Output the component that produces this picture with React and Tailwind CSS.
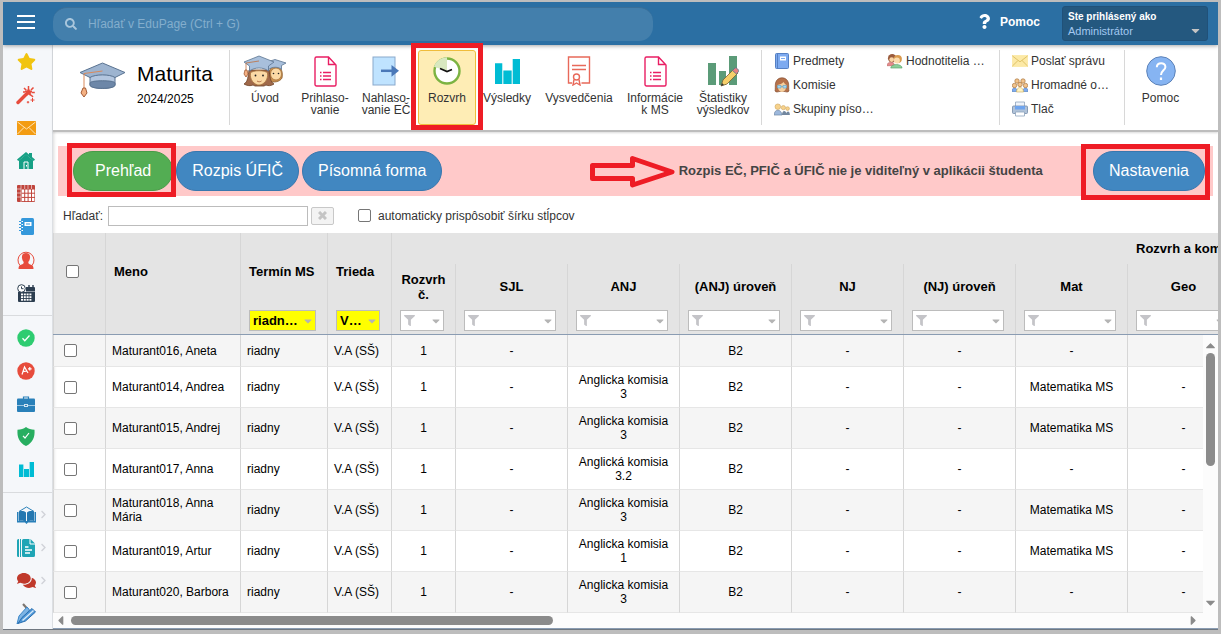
import React, { useState } from 'react';
import {
  FaStar, FaEnvelope, FaSearch, FaFilter, FaCaretDown, FaCaretUp, FaCaretLeft, FaCaretRight,
  FaTimes, FaComments, FaQuestion, FaChevronRight,
} from 'react-icons/fa';

/* ---------- sidebar icons ---------- */

const WandIcon = () => (
  <svg width="20" height="20" viewBox="0 0 20 20" fill="none" stroke="#e74c3c">
    <path d="M2 17.5L10.5 9" strokeWidth="3.4" strokeLinecap="round" />
    <path d="M12.5 1v3.5M8 3l2.3 2.3M17.5 2.5l-2.5 2.6M18.8 7.5h-3.3M17 12l-2-2M7 7h2.5" strokeWidth="1.5" />
    <path d="M12.5 3.5l1 2.3 2.5.4-1.8 1.7.4 2.5-2.1-1.2-2.2 1.2.4-2.5L9 6.200l2.500-.4z" fill="#e74c3c" />
    <path d="M16.500 13v4M14.500 15h4M12 16v2.400M10.800 17.200h2.400" strokeWidth="1" />
  </svg>
);

const HouseIcon = () => (
  <svg width="18" height="19" viewBox="0 0 18 19">
    <path d="M9 1L0 8.500l1.200 1.500L9 3.700l7.800 6.300L18 8.500l-3-2.500V2h-3v1.500z" fill="#16a085" />
    <path d="M2 9.200L9 3.500l7 5.700V18H2z" fill="#16a085" />
    <path d="M7 18v-7h4v7" fill="none" stroke="#fff" />
    <path d="M9.500 14v1.500" stroke="#fff" />
  </svg>
);

const GridIcon = () => (
  <svg width="18" height="17" viewBox="0 0 18 17">
    <rect width="18" height="17" rx="1" fill="#c0453c" />
    {[4.500, 8.700, 12.900].map((y) => [4.800, 8.200, 11.600, 15].map((x) => (
      <rect key={`${x}-${y}`} x={x} y={y} width="2.400" height="3.200" fill="#fff" />
    )))}
    <path d="M4 0v17M0 4h4M0 8h4M0 12h4M7.700 0v4M11 0v4M14.500 0v4" stroke="#f5f6f8" strokeWidth=".6" />
  </svg>
);

const NotebookIcon = () => (
  <svg width="15" height="17" viewBox="0 0 15 17">
    <rect x="2" y="0" width="13" height="17" rx="1.500" fill="#3498db" />
    <rect x="5.500" y="4" width="7" height="4" fill="#fff" />
    <path d="M7 6h4" stroke="#3498db" />
    <path d="M0 3.500h3M0 6.500h3M0 9.500h3M0 12.500h3" stroke="#3498db" />
    <path d="M2.500 3.500h1.500M2.500 6.500h1.500M2.500 9.500h1.500M2.500 12.500h1.500" stroke="#fff" />
  </svg>
);

const PersonIcon = () => (
  <svg width="18" height="20" viewBox="0 0 18 20">
    <path d="M3 15.500A8 8 0 1 1 15 15.500" fill="none" stroke="#e74c3c" />
    <path d="M9 3c3 0 4.500 2 4 5-.2 2-1 3-1.700 4 0 1.500.5 2 2.700 2.700 1.700.6 2.500 1.500 2.500 4.300H1.500c0-2.800.8-3.700 2.500-4.300 2.200-.7 2.700-1.200 2.700-2.700C6 11 5.200 10 5 8c-.5-3 1-5 4-5z" fill="#e74c3c" />
  </svg>
);

const CalendarIcon = () => (
  <svg width="18" height="18" viewBox="0 0 18 18">
    <path d="M1 8h17v9a1 1 0 0 1-1 1H2a1 1 0 0 1-1-1zM9 3h8a1 1 0 0 1 1 1v3.500H9z" fill="#2c3e50" />
    <path d="M12 1v3M16 1v3" stroke="#2c3e50" strokeWidth="1.400" />
    <circle cx="4.500" cy="4.500" r="3.800" fill="#fff" stroke="#2c3e50" />
    <path d="M4.500 2.500v2.200H6.500" fill="none" stroke="#2c3e50" />
    {[9.500, 12.200, 14.900].map((y) => [4, 6.800, 9.600, 12.400].map((x) => (
      <rect key={`${x}-${y}`} x={x} y={y} width="2" height="1.800" fill="#fff" />
    )))}
  </svg>
);

const CheckIcon = () => (
  <svg width="18" height="18" viewBox="0 0 18 18">
    <circle cx="9" cy="9" r="8.700" fill="#2ecc71" />
    <path d="M5.500 9.300l2.300 2.400 4.700-5.200" fill="none" stroke="#fff" strokeWidth="1.300" />
  </svg>
);

const GradeIcon = () => (
  <svg width="18" height="18" viewBox="0 0 18 18">
    <circle cx="9" cy="9" r="8.700" fill="#e74c3c" />
    <path d="M5 12.500L7.500 5l3.500 6M6 9.700l4-.7M12.800 5v3.600M11 6.800h3.600" fill="none" stroke="#fff" strokeWidth="1.200" />
  </svg>
);

const BriefcaseIcon = () => (
  <svg width="18" height="16" viewBox="0 0 18 16">
    <path d="M6.500 3V1h5v2" fill="none" stroke="#2980b9" strokeWidth="1.200" />
    <rect x="0" y="2.500" width="18" height="13.500" rx="1" fill="#2980b9" />
    <path d="M0 9.500h7M11 9.500h7" stroke="#9cc6e2" />
    <rect x="7.500" y="8.500" width="3" height="2" fill="none" stroke="#cfe3f1" />
  </svg>
);

const ShieldIcon = () => (
  <svg width="18" height="19" viewBox="0 0 18 19">
    <path d="M9 0c2.500 1.800 5 2.500 8.500 2.700C18 10 16 15.500 9 19 2 15.500 0 10 .5 2.700 4 2.500 6.500 1.800 9 0z" fill="#27ae60" />
    <path d="M6 8.800l2 2.200 4-5" fill="none" stroke="#fff" strokeWidth="1.200" />
  </svg>
);

const BarsIcon = ({ size }) => (
  <svg width={size} height={size} viewBox="0 0 24 24" fill="#00bcd4">
    <path d="M0 4h7v20H0zM8 11h8v13H8zM17 0h7v24h-7z" />
  </svg>
);

const BookIcon = () => (
  <svg width="19" height="18" viewBox="0 0 19 18">
    <path d="M2 5.500L9.500 1 17 5.500" fill="none" stroke="#2980b9" />
    <path d="M0 6h1.500v10H0zM17.500 6H19v10h-1.500zM0 15h19v1.500H11L9.500 18 8 16.500H0z" fill="#2980b9" />
    <path d="M2 5.500c3-.8 5-.5 7 1V16c-2-1.300-4-1.500-7-1zM17 5.500c-3-.8-5-.5-7 1V16c2-1.300 4-1.500 7-1z" fill="#2477b0" />
  </svg>
);

const PagesIcon = () => (
  <svg width="18" height="18" viewBox="0 0 18 18">
    <path d="M1.500 0H2v18h-.5A1.500 1.500 0 0 1 0 16.500v-15A1.500 1.500 0 0 1 1.500 0zM3 0h1v18H3zM6.500 0h7L18 4.500V16.500a1.500 1.500 0 0 1-1.500 1.500h-10A1.500 1.500 0 0 1 5 16.500v-15A1.500 1.500 0 0 1 6.500 0z" fill="#1fa5b5" />
    <path d="M8 8h3.500M8 11h7M8 14h5" stroke="#fff" strokeWidth="1.300" />
    <path d="M13 0v5h5" fill="none" stroke="#fff" />
  </svg>
);

const PensIcon = () => (
  <svg width="21" height="22" viewBox="0 0 21 22">
    <path d="M7 1l5 5.500" fill="none" stroke="#7c7670" strokeWidth="2.200" />
    <path d="M1 21l2-8 8-9 2.500 3-7.500 9z" fill="#7db4e4" stroke="#3a86c8" />
    <path d="M2 20.500l4-6 10-9 3.500 3.500-10 9z" fill="#4d97d8" stroke="#2a6fb0" />
    <path d="M6.500 17.500L17.500 7.500" stroke="#d5e8f8" strokeWidth="1.400" />
  </svg>
);

const sidebarGroups = [
  [
    { label: 'Obľúbené', icon: <FaStar size={19} color="#f1c40f" /> },
    { label: 'Sprievodca', icon: <WandIcon /> },
    { label: 'Správy', icon: <MailIcon width={19} height={14} fill="#f39c12" line="#fde3b4" /> },
    { label: 'Domov', icon: <HouseIcon /> },
    { label: 'Rozvrh hodín', icon: <GridIcon /> },
    { label: 'Triedna kniha', icon: <NotebookIcon /> },
    { label: 'Suplovanie', icon: <PersonIcon /> },
    { label: 'Kalendár', icon: <CalendarIcon /> },
  ],
  [
    { label: 'Dochádzka', icon: <CheckIcon /> },
    { label: 'Známky', icon: <GradeIcon /> },
    { label: 'Agenda', icon: <BriefcaseIcon /> },
    { label: 'Overenie', icon: <ShieldIcon /> },
    { label: 'Štatistiky', icon: <BarsIcon size={15} /> },
  ],
  [
    { label: 'Vyučovanie', icon: <BookIcon />, more: true },
    { label: 'Dokumenty', icon: <PagesIcon />, more: true },
    { label: 'Komunikácia', icon: <FaComments size={19} color="#c0392b" />, more: true },
    { label: 'Písanie', icon: <PensIcon /> },
  ],
];

function MailIcon({ width, height, fill, line }) {
  return (
    <svg width={width} height={height} viewBox="0 0 19 14">
      <rect x=".5" y=".5" width="18" height="13" fill={fill} stroke={fill} />
      <path d="M.5 1l9 7 9-7M.5 13l6.500-6.500M18.500 13L12 6.500" fill="none" stroke={line} />
    </svg>
  );
}

/* ---------- ribbon icons ---------- */

const CapIcon = () => (
  <svg width="47" height="37" viewBox="0 0 47 37" stroke="#5a7391" strokeWidth="1">
    <path d="M11 11v12c0 4.500 25 4.500 25 0V11z" fill="#b3c6df" />
    <path d="M11 21c0-3 25-3 25 0v2c0 4.500-25 4.500-25 0z" fill="#6d87a8" />
    <path d="M1 10.500L23.500 1 46 10.500 36 15.500c-5-3.500-20-3.500-25 0z" fill="#9db4d0" />
    <path d="M23.500 9L5 11.500V26" fill="none" stroke="#d98a5c" />
    <path d="M4 26h2.500l1.500 5-3 4-3-4z" fill="#f4b183" stroke="#a35a35" />
  </svg>
);

const GraduatesIcon = () => (
  <svg width="44" height="32" viewBox="0 0 44 32" strokeWidth=".8">
    <path d="M26 26c0-5-1-15 6-15s8 7 7 12c-2 4-9 5-13 3z" fill="#c98f4e" stroke="#8a5d2d" />
    <ellipse cx="33" cy="19" rx="5.500" ry="6" fill="#fbd9a5" stroke="#a9763f" />
    <path d="M21 8l11-3.500L43 8l-4.500 2.500v4c-3-3-9-3-13 0z" fill="#a8bfdb" stroke="#5a7391" />
    <path d="M1 29c4-2 4-8 5-14h20c1 6 1 12 5 14-3 2-6 2-8 1l-2 1h-9l-2-1c-2 1-6 1-9-1z" fill="#a0694a" stroke="#6d4228" />
    <path d="M7.500 18c2-3 15-3 17 0 1 7-4 12-8.500 12S6.500 25 7.500 18z" fill="#fbd9a5" stroke="#a9763f" />
    <path d="M1 7L16 1l15 6-5.500 4v5c-5-4-14-4-19 0v-5z" fill="#a8bfdb" stroke="#5a7391" />
    <path d="M16 6L3 8v7" fill="none" stroke="#c0703f" />
    <path d="M2 15h2l1 4-2 3-2-3z" fill="#f4b183" stroke="#a35a35" />
    <circle cx="12.500" cy="20.500" r=".9" fill="#222" />
    <circle cx="20" cy="20.500" r=".9" fill="#222" />
    <circle cx="30.500" cy="18.500" r=".8" fill="#222" />
    <circle cx="35.500" cy="18.500" r=".8" fill="#222" />
    <path d="M14 26c1.500 1 3 1 4.500 0" fill="none" stroke="#a35a35" />
  </svg>
);

const FormIcon = () => (
  <svg width="23" height="31" viewBox="0 0 23 31" fill="none" stroke="#e91e63" strokeWidth="1.400">
    <path d="M2.500 1h12L22 9v19.500a1.500 1.500 0 0 1-1.500 1.500h-18A1.500 1.500 0 0 1 1 28.500v-26A1.500 1.500 0 0 1 2.500 1zM14.500 1v7.500H22" />
    <path d="M9 16.500h8M9 20h8M9 23.500h8M6 16.500h1.500M6 20h1.500M6 23.500h1.500" strokeWidth="1.300" />
  </svg>
);

const ExportIcon = () => (
  <svg width="28" height="30" viewBox="0 0 28 30">
    <rect x="1" y="1" width="22" height="28" fill="#bfe3ff" stroke="#8aa9cc" />
    <path d="M9 14.800h13" stroke="#4a78b8" strokeWidth="2.500" />
    <path d="M19.500 9L27 14.800l-7.500 6z" fill="#4a78b8" />
  </svg>
);

const ClockIcon = () => (
  <svg width="28" height="28" viewBox="0 0 28 28">
    <circle cx="14" cy="14" r="12.500" fill="#fff" stroke="#7cb342" strokeWidth="2.400" />
    <path d="M14 14V.2A13.800 13.800 0 0 0 .9 9.700z" fill="#d8e8c0" />
    <path d="M7 11.500l7 3 5-2" fill="none" stroke="#111" strokeWidth="1.700" />
  </svg>
);

const DiplomaIcon = () => (
  <svg width="24" height="30" viewBox="0 0 24 30" fill="none" stroke="#e8695a" strokeWidth="1.400">
    <path d="M5 27H1.500V1H22.500v26h-8" />
    <path d="M5 9.500h14M5 13.500h14" strokeWidth="1.300" />
    <circle cx="9.500" cy="21" r="3" />
    <path d="M7 23.500L6 29l3.500-2 3.500 2-1-5.500" />
  </svg>
);

const StatsIcon = () => (
  <svg width="32" height="32" viewBox="0 0 32 32">
    <path d="M1 8h8v22H1zM12 16h7v14h-7zM22 1h8v29h-8z" fill="#5b9b78" />
    <path d="M14 31l2-6L27 14l4 4-11 11z" fill="#f6cf6a" stroke="#7a6030" strokeWidth=".8" />
    <path d="M25.500 15.500L28 13c1-.8 4.500 2 3.500 3.500L29.500 19z" fill="#e88080" stroke="#5a7391" strokeWidth=".8" />
    <path d="M14 31l1-3 2 2z" fill="#333" />
  </svg>
);

const HelpIcon = () => (
  <svg width="30" height="30" viewBox="0 0 30 30" fill="none">
    <circle cx="15" cy="15" r="14.300" fill="#86b4f2" stroke="#5c82b8" />
    <path d="M10.800 11.200c.2-5.200 8.600-5.200 8.600-.3 0 3.300-4.400 3.600-4.400 8" stroke="#fff" strokeWidth="2" />
    <path d="M15 21.500v2.500" stroke="#fff" strokeWidth="2.200" />
  </svg>
);

const BlueBookIcon = () => (
  <svg width="16" height="16" viewBox="0 0 16 16">
    <rect x="1.500" y=".5" width="13" height="15" rx="1" fill="#7daaf0" stroke="#5580c4" />
    <path d="M3.500 1v14" stroke="#5580c4" />
    <rect x="6" y="3.500" width="6" height="4" fill="#fff" />
    <path d="M7 5.500h4" stroke="#7daaf0" />
  </svg>
);

const FaceIcon = () => (
  <svg width="16" height="16" viewBox="0 0 16 16">
    <path d="M1 14C1.500 12 1 9 1.500 6 3-1 13-1 14.500 6c.5 3 0 6 .5 8-1 1.500-3 1-4 .5H5c-1 .5-3 1-4-.5z" fill="#b5714a" stroke="#7a4528" strokeWidth=".6" />
    <path d="M3.500 8c2-.3 5-1.500 6-3 .5 1 2 2.500 3 3 0 4-2 7-4.500 7S3.500 12 3.500 8z" fill="#f6cf9d" />
    <path d="M3.500 8.500h3.500v2.500H3.500zM9 8.500h3.500v2.500H9zM7 9.500h2" fill="#a8d8f0" stroke="#5a9fc8" strokeWidth=".6" />
  </svg>
);

const GroupIcon = () => (
  <svg width="16" height="13" viewBox="0 0 17 14">
    <circle cx="4" cy="4" r="3" fill="#f7d28c" stroke="#caa25a" strokeWidth=".6" />
    <circle cx="10" cy="5" r="2.300" fill="#f7d28c" stroke="#caa25a" strokeWidth=".6" />
    <circle cx="14.500" cy="6" r="2" fill="#f7d28c" stroke="#caa25a" strokeWidth=".6" />
    <path d="M0 13c0-7 8-7 8.500 0z" fill="#9db8dc" stroke="#5a7391" strokeWidth=".6" />
    <path d="M8.500 13c0-5 4-6 5-1v1zM13 13c0-5 4-5 4 0z" fill="#72879f" />
  </svg>
);

const ExaminersIcon = () => (
  <svg width="16" height="16" viewBox="0 0 17 16">
    <circle cx="5.500" cy="5" r="4.500" fill="#9a5b3c" />
    <path d="M0 13c0-5 8-5 8 0z" fill="#e58b8b" stroke="#b85c5c" strokeWidth=".6" />
    <circle cx="5" cy="6.500" r="2.500" fill="#f9d5a5" />
    <circle cx="11.500" cy="6" r="4.300" fill="#d99a4e" />
    <circle cx="10.500" cy="7.500" r="3.200" fill="#fbdcae" />
    <path d="M4 15.500c0-5 12-5 12 0z" fill="#8ccf9a" stroke="#4f9a60" strokeWidth=".6" />
  </svg>
);

const BulkIcon = () => (
  <svg width="16" height="15" viewBox="0 0 16 15">
    <path d="M0 13.500c0-5 5-5 5 0zM11 13.500c0-5 5-5 5 0z" fill="#7daaf0" stroke="#4a78b8" strokeWidth=".6" />
    <path d="M4.500 14c0-6 7-6 7 0z" fill="#fff4c4" stroke="#c9a95a" strokeWidth=".6" />
    {[[5, 3], [11, 3], [2.500, 7.500], [13.500, 7.500], [8, 6.500]].map(([x, y]) => (
      <circle key={`${x}-${y}`} cx={x} cy={y} r="2.200" fill="#f3c48c" stroke="#a8763f" strokeWidth=".7" />
    ))}
  </svg>
);

const PrinterIcon = () => (
  <svg width="16" height="16" viewBox="0 0 16 16" strokeWidth=".8">
    <path d="M3.500 1h9v5h-9z" fill="#eef3fa" stroke="#8ea3bd" />
    <rect x=".5" y="5" width="15" height="7.500" rx="1" fill="#b0c2d8" stroke="#7289a6" />
    <path d="M3 5h10v3.500H3z" fill="#6ea4ee" />
    <path d="M3.500 11h9v4h-9z" fill="#fff" stroke="#8ea3bd" />
  </svg>
);

const ribbonItems = [
  { lines: ['Úvod'], icon: <GraduatesIcon />, width: 'w-[60px]' },
  { lines: ['Prihlaso-', 'vanie'], icon: <FormIcon />, width: 'w-[60px]' },
  { lines: ['Nahlaso-', 'vanie EČ'], icon: <ExportIcon />, width: 'w-[62px]' },
  { lines: ['Rozvrh'], icon: <ClockIcon />, width: 'w-[60px]', active: true },
  { lines: ['Výsledky'], icon: <BarsIcon size={25} />, width: 'w-[60px]' },
  { lines: ['Vysvedčenia'], icon: <DiplomaIcon />, width: 'w-[84px]' },
  { lines: ['Informácie', 'k MS'], icon: <FormIcon />, width: 'w-[68px]' },
  { lines: ['Štatistiky', 'výsledkov'], icon: <StatsIcon />, width: 'w-[68px]' },
];

const subjectLinks = [
  { label: 'Predmety', icon: <BlueBookIcon /> },
  { label: 'Komisie', icon: <FaceIcon /> },
  { label: 'Skupiny píso…', icon: <GroupIcon /> },
];

const messageLinks = [
  { label: 'Poslať správu', icon: <MailIcon width={16} height={12} fill="#fce9a6" line="#d9bb5c" /> },
  { label: 'Hromadné o…', icon: <BulkIcon /> },
  { label: 'Tlač', icon: <PrinterIcon /> },
];

/* ---------- table data ---------- */

const subjects = ['SJL', 'ANJ', '(ANJ) úroveň', 'NJ', '(NJ) úroveň', 'Mat', 'Geo'];

const students = [
  { name: 'Maturant016, Aneta', cells: ['-', '', 'B2', '-', '-', '-', ''] },
  { name: 'Maturant014, Andrea', cells: ['-', 'Anglicka komisia 3', 'B2', '-', '-', 'Matematika MS', '-'] },
  { name: 'Maturant015, Andrej', cells: ['-', 'Anglicka komisia 3', 'B2', '-', '-', 'Matematika MS', '-'] },
  { name: 'Maturant017, Anna', cells: ['-', 'Anglická komisia 3.2', 'B2', '-', '-', '-', '-'] },
  { name: 'Maturant018, Anna Mária', cells: ['-', 'Anglicka komisia 3', 'B2', '-', '-', 'Matematika MS', '-'] },
  { name: 'Maturant019, Artur', cells: ['-', 'Anglicka komisia 1', 'B2', '-', '-', 'Matematika MS', '-'] },
  { name: 'Maturant020, Barbora', cells: ['-', 'Anglicka komisia 3', 'B2', '-', '-', '-', '-'] },
];

const CHECKBOX = 'block size-[13px] appearance-none rounded-[2px] border border-[#767676] bg-white checked:bg-[#2b6fa3]';

/* ---------- parts ---------- */

const Highlight = ({ className }) => (
  <span className={`pointer-events-none absolute z-20 border-5 border-[#ee1c25] ${className}`} />
);

const SmallLinks = ({ items, className }) => (
  <nav className={`flex flex-col ${className}`}>
    {items.map((item) => (
      <a key={item.label} href="#" className="flex h-6 items-center gap-[3px] whitespace-nowrap pb-0.5">
        <span className="flex w-4 justify-center">{item.icon}</span>
        {item.label}
      </a>
    ))}
  </nav>
);

const Divider = () => <div className="h-[75px] w-px shrink-0 bg-[#d8d8d8]" />;

const RibbonButton = ({ item }) => (
  <div className={`relative shrink-0 px-px ${item.width}`}>
    <button
      type="button"
      className={`flex h-[75px] w-full flex-col items-center rounded-[3px] border pt-0.5 ${
        item.active ? 'border-[#f0bd3c] bg-[#feedb5]' : 'border-transparent'
      }`}
    >
      <span className="flex h-9 items-center">{item.icon}</span>
      <span className="mt-[3px] whitespace-nowrap leading-3">
        {item.lines.map((line) => (
          <span key={line} className="block">{line}</span>
        ))}
      </span>
    </button>
    {item.active && <Highlight className="-inset-x-[6px] -top-[7px] -bottom-[5px]" />}
  </div>
);

const Pill = ({ children, className = 'bg-[#4187c1] border-[#3877ae] px-[15px]' }) => (
  <button type="button" className={`h-10 whitespace-nowrap rounded-full border text-base text-white ${className}`}>
    {children}
  </button>
);

const ColumnFilter = ({ label, value }) => (
  <div className={`flex h-[21px] items-center border border-[#bcbcbc] pl-[3px] ${value ? 'bg-[#ffff00]' : 'bg-white'}`}>
    {!value && <FaFilter size={11} className="shrink-0 text-[#c4c4c8]" />}
    <select
      aria-label={label}
      defaultValue={value || ''}
      className="min-w-0 flex-1 appearance-none bg-transparent text-[13px] font-bold text-black outline-none"
    >
      <option value={value || ''}>{value || ''}</option>
    </select>
    <FaCaretDown size={12} className="mr-px shrink-0 text-[#b4b4b4]" />
  </div>
);

const Columns = () => (
  <colgroup>
    <col className="w-[52px]" />
    <col className="w-[135px]" />
    <col className="w-[87px]" />
    <col className="w-[64px]" />
    <col className="w-[64px]" />
    {subjects.map((subject) => <col key={subject} className="w-[112px]" />)}
  </colgroup>
);

const TableHead = () => {
  const side = 'border-l border-[#d6d6d6]';
  const filter = `${side} pl-2 pr-[11px] align-top pt-px`;
  return (
    <table className="w-[1186px] table-fixed border-separate border-spacing-0 text-[13px] leading-[15px] text-black">
      <Columns />
      <thead>
        <tr className="h-[31px]">
          <th rowSpan={2} className={`${side} pl-3`}>
            <input type="checkbox" aria-label="Vybrať všetkých" className={CHECKBOX} />
          </th>
          <th rowSpan={2} className={`${side} pl-2 text-left`}>Meno</th>
          <th rowSpan={2} className={`${side} pl-2 text-left`}>Termín MS</th>
          <th rowSpan={2} className={`${side} pl-2 text-left`}>Trieda</th>
          <th colSpan={7} className={side} />
          <th className="whitespace-nowrap pl-[9px] text-left">Rozvrh a komisie</th>
        </tr>
        <tr className="h-[45px]">
          <th className={side}>Rozvrh<br />č.</th>
          {subjects.map((subject) => <th key={subject} className={side}>{subject}</th>)}
        </tr>
        <tr className="h-[25px]">
          <td className={side} />
          <td className={side} />
          <td className={filter}><ColumnFilter label="Termín MS" value="riadn…" /></td>
          <td className={filter}><ColumnFilter label="Trieda" value="V…" /></td>
          <td className={filter}><ColumnFilter label="Rozvrh č." /></td>
          {subjects.map((subject) => (
            <td key={subject} className={filter}><ColumnFilter label={subject} /></td>
          ))}
        </tr>
      </thead>
    </table>
  );
};

const TableBody = () => {
  const cell = 'border-l border-b border-l-[#d6d6d6] border-b-[#e6e6e6]';
  return (
    <table className="w-[1186px] table-fixed border-separate border-spacing-0 text-xs leading-[14px] text-black">
      <Columns />
      <tbody>
        {students.map((student, index) => (
          <tr key={student.name} className={`${index === 0 ? 'h-8' : 'h-[41px]'} odd:bg-[#f5f5f5]`}>
            <td className={`${cell} pl-[10px]`}>
              <input type="checkbox" aria-label={student.name} className={CHECKBOX} />
            </td>
            <td className={`${cell} px-1.5`}>{student.name}</td>
            <td className={`${cell} px-1.5`}>riadny</td>
            <td className={`${cell} px-1.5`}>V.A (SŠ)</td>
            <td className={`${cell} text-center`}>1</td>
            {student.cells.map((value, i) => (
              <td key={subjects[i]} className={`${cell} px-2 text-center`}>{value}</td>
            ))}
          </tr>
        ))}
      </tbody>
    </table>
  );
};

const TopBar = () => (
  <header className="relative z-10 flex h-[43px] items-center bg-[#2b6fa3] pr-[10px] text-white shadow-[0_1px_4px_rgba(0,0,0,0.35)]">
    <button type="button" aria-label="Menu" className="flex w-[50px] shrink-0 flex-col gap-1 pb-1 pl-[14px]">
      <span className="h-0.5 w-[18px] bg-white" />
      <span className="h-0.5 w-[18px] bg-white" />
      <span className="h-0.5 w-[18px] bg-white" />
    </button>
    <label className="flex h-[34px] w-[600px] items-center gap-[11px] rounded-[14px] border-t border-[#3a6f98] bg-[#437fac] pl-3 text-[#a9c6dc]">
      <FaSearch size={12} />
      <input
        type="text"
        aria-label="Hľadať"
        placeholder="Hľadať v EduPage (Ctrl + G)"
        className="flex-1 bg-transparent text-xs outline-none placeholder:text-[#84aecd]"
      />
    </label>
    <a href="#" className="ml-auto flex items-center gap-2 pb-1 font-bold">
      <FaQuestion size={15} />
      Pomoc
    </a>
    <button
      type="button"
      className="ml-[22px] flex h-[35px] w-[146px] flex-col justify-center rounded-[3px] border border-[#205179] bg-[#24587f] px-[5px] text-left text-[11px] leading-[14px]"
    >
      <span className="text-[10px] font-bold">Ste prihlásený ako</span>
      <span className="flex w-full items-center justify-between text-[#a3c8f0]">
        Administrátor
        <FaCaretDown size={13} className="text-[#c4c4c4]" />
      </span>
    </button>
  </header>
);

const Sidebar = () => (
  <aside className="flex w-[50px] shrink-0 flex-col border-r border-[#dcdfe3] bg-[#f5f7fa] shadow-[1px_0_3px_rgba(0,0,0,0.15)]">
    {sidebarGroups.map((group, index) => (
      <nav key={index} className={index > 0 ? 'mt-1.5 border-t border-[#d9dbde] pt-[5px]' : ''}>
        {group.map((item) => (
          <a key={item.label} href="#" title={item.label} className="relative flex h-[33px] items-center justify-center pr-[3px]">
            {item.icon}
            {item.more && <FaChevronRight size={9} className="absolute right-1 text-[#d0d3d8]" />}
          </a>
        ))}
      </nav>
    ))}
  </aside>
);

const Ribbon = () => (
  <div className="flex h-[87px] shrink-0 items-start border-b-2 border-[#bdbdbd] bg-white pt-[5px] text-xs text-[#333] shadow-[0_1px_2px_rgba(0,0,0,0.15)]">
    <div className="flex w-[176px] shrink-0 items-start gap-[11px] pl-[26px] pt-3">
      <CapIcon />
      <div className="text-black">
        <h1 className="text-[21px] leading-6">Maturita</h1>
        <p className="mt-1.5 leading-[14px]">2024/2025</p>
      </div>
    </div>
    <Divider />
    <div className="flex h-[75px] shrink-0 pl-[5px] pr-1">
      {ribbonItems.map((item) => <RibbonButton key={item.lines[0]} item={item} />)}
    </div>
    <Divider />
    <SmallLinks items={subjectLinks} className="ml-3 w-[113px]" />
    <SmallLinks items={[{ label: 'Hodnotitelia …', icon: <ExaminersIcon /> }]} className="w-[112px]" />
    <Divider />
    <SmallLinks items={messageLinks} className="ml-3 w-[112px]" />
    <Divider />
    <RibbonButton item={{ lines: ['Pomoc'], icon: <HelpIcon />, width: 'w-[71px]' }} />
  </div>
);

export default function App() {
  const [search, setSearch] = useState('');

  return (
    <div className="flex h-screen flex-col overflow-hidden bg-[#bdbdbd] px-[3px] pt-0.5 pb-1 font-['Liberation_Sans',Arial,sans-serif] text-xs">
      <div className="flex min-h-0 flex-1 flex-col overflow-hidden border-b border-[#6f7780] bg-white">
        <TopBar />
        <div className="flex min-h-0 flex-1">
          <Sidebar />
          <main className="flex min-w-0 flex-1 flex-col">
            <Ribbon />

            <section className="mx-[5px] mt-[14px] flex h-[50px] shrink-0 items-center bg-[#ffc9c9] pl-[15px] pr-2">
              <div className="relative mr-[3px]">
                <Pill className="border-[#489a48] bg-[#53ad53] px-[21px]">Prehľad</Pill>
                <Highlight className="-left-[6px] -right-[3px] -top-2 -bottom-[6px]" />
              </div>
              <div className="flex gap-[3px]">
                <Pill>Rozpis ÚFIČ</Pill>
                <Pill>Písomná forma</Pill>
              </div>
              <div className="mx-auto flex items-center gap-[3px] pl-[97px]">
                <svg width="86" height="34" viewBox="0 0 86 34" fill="none" stroke="#ee1c25" strokeWidth="5" strokeLinejoin="round">
                  <path d="M2.500 11.500H42.500V4.500L82 18 42.500 31V24.500H2.500z" />
                </svg>
                <strong className="whitespace-nowrap text-[13px] text-[#444]">
                  Rozpis EČ, PFIČ a ÚFIČ nie je viditeľný v aplikácii študenta
                </strong>
              </div>
              <div className="relative">
                <Pill>Nastavenia</Pill>
                <Highlight className="-left-3 -right-[5px] -top-[7px] -bottom-[9px]" />
              </div>
            </section>

            <div className="flex h-[37px] shrink-0 items-center pl-[10px] pt-0.5 text-[#333]">
              <label htmlFor="search" className="w-[45px]">Hľadať:</label>
              <input
                id="search"
                type="text"
                value={search}
                onChange={(e) => setSearch(e.target.value)}
                className="h-5 w-[200px] border border-[#bcbcbc] bg-white px-1 outline-none"
              />
              <button
                type="button"
                aria-label="Vymazať"
                onClick={() => setSearch('')}
                className="ml-[3px] flex h-[18px] w-[23px] items-center justify-center rounded-[2px] border border-[#c8c8c8] bg-[#f3f3f3]"
              >
                <svg width="9" height="9" viewBox="0 0 9 9" stroke="#c4c4c4" strokeWidth="3">
                  <path d="M1 1l7 7M8 1L1 8" />
                </svg>
              </button>
              <label className="ml-6 flex items-center gap-[7px]">
                <input type="checkbox" className={CHECKBOX} />
                automaticky prispôsobiť šírku stĺpcov
              </label>
            </div>

            <div className="shrink-0 overflow-hidden border-b border-[#8a9cb2] bg-[#e4e4e4]">
              <TableHead />
            </div>
            <div className="flex min-h-0 flex-1">
              <div className="min-w-0 flex-1 overflow-hidden">
                <TableBody />
              </div>
              <div className="flex w-[15px] shrink-0 flex-col items-center bg-[#fcfcfc] py-[3px] text-[#8b8b8b]">
                <FaCaretUp size={15} />
                <div className="h-[113px] w-[9px] rounded-full bg-[#8b8b8b]" />
                <FaCaretDown size={15} className="mt-auto" />
              </div>
            </div>
            <div className="flex h-4 shrink-0 items-center gap-[3px] border-b border-[#8a9cb2] bg-[#fcfcfc] pr-[17px] text-[#8b8b8b]">
              <FaCaretLeft size={15} />
              <div className="h-[9px] w-[42%] rounded-full bg-[#8b8b8b]" />
              <FaCaretRight size={15} className="ml-auto" />
            </div>
          </main>
        </div>
      </div>
    </div>
  );
}
